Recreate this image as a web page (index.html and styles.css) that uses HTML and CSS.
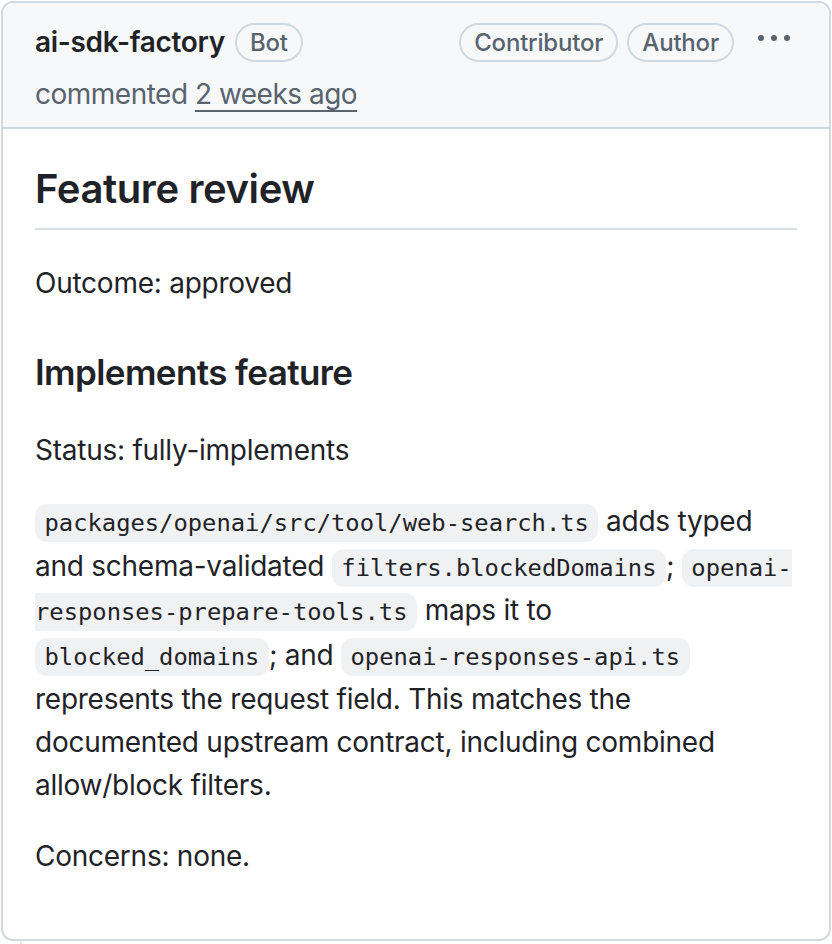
FILE: index.html
```html
<!DOCTYPE html>
<html lang="en">
<head>
<meta charset="utf-8">
<title>Feature review comment</title>
<link rel="stylesheet" href="styles.css">
</head>
<body>
<div class="comment">
  <div class="comment-header">
    <div class="header-row">
      <div class="author-group">
        <a class="author">ai-sdk-factory</a>
        <span class="label">Bot</span>
      </div>
      <div class="actions">
        <span class="label">Contributor</span>
        <span class="label">Author</span>
        <button class="kebab" aria-label="Show options">
          <svg width="32" height="32" viewBox="0 0 16 16" fill="currentColor"><path d="M8 9a1.5 1.5 0 1 0 0-3 1.5 1.5 0 0 0 0 3ZM1.5 9a1.5 1.5 0 1 0 0-3 1.5 1.5 0 0 0 0 3Zm13 0a1.5 1.5 0 1 0 0-3 1.5 1.5 0 0 0 0 3Z"/></svg>
        </button>
      </div>
    </div>
    <div class="meta">commented <a class="time">2 weeks ago</a></div>
  </div>
  <div class="comment-body">
    <h2>Feature review</h2>
    <p>Outcome: approved</p>
    <h3>Implements feature</h3>
    <p>Status: fully-implements</p>
    <p><code>packages/openai/src/tool/web-search.ts</code> adds typed and schema-validated <code>filters.blockedDomains</code>; <code>openai-responses-prepare-tools.ts</code> maps it to <code>blocked_domains</code>; and <code>openai-responses-api.ts</code> represents the request field. This matches the documented upstream contract, including combined allow/block filters.</p>
    <p>Concerns: none.</p>
  </div>
</div>
<div class="timeline-stub"></div>
</body>
</html>
```
FILE: styles.css
```css
html, body {
  margin: 0;
  padding: 0;
  background: #ffffff;
}

body {
  font-family: Inter, "Liberation Sans", sans-serif;
  color: #1f2328;
}

.comment {
  box-sizing: border-box;
  width: 830px;
  height: 940px;
  margin: 1px 0 0 1px;
  border: 2px solid #d1d9e0;
  border-radius: 12px;
  overflow: hidden;
  background: #ffffff;
}

.comment-header {
  background: #f6f8fa;
  border-bottom: 2px solid #d1d9e0;
  padding: 14px 32px 12px 32px;
}

.header-row {
  display: flex;
  align-items: center;
  justify-content: space-between;
  height: 50px;
}

.author-group {
  display: flex;
  align-items: center;
  gap: 10px;
}

.author {
  font-size: 28px;
  font-weight: 600;
  letter-spacing: -0.3px;
  color: #1f2328;
}

.label {
  display: inline-flex;
  align-items: center;
  box-sizing: border-box;
  height: 39px;
  padding: 0 13px;
  border: 2px solid #d1d9e0;
  border-radius: 999px;
  font-size: 24px;
  font-weight: 500;
  letter-spacing: -0.2px;
  color: #59636e;
}

.actions {
  display: flex;
  align-items: center;
  gap: 9px;
}

.kebab {
  display: flex;
  align-items: center;
  justify-content: center;
  margin-left: 15px;
  margin-right: 7px;
  padding: 0;
  border: 0;
  background: transparent;
  color: #59636e;
  width: 32px;
  height: 32px;
  position: relative;
  top: -3px;
}

.meta {
  margin-top: 6px;
  font-size: 28px;
  line-height: 42px;
  letter-spacing: -0.5px;
  color: #59636e;
}

.time {
  color: #59636e;
  text-decoration: underline;
  text-underline-offset: 6px;
  text-decoration-thickness: 2px;
}

.comment-body {
  padding: 32px 32px;
  font-size: 28px;
  line-height: 43px;
  letter-spacing: -0.25px;
}

.comment-body h2 {
  margin: 0 0 32px 0;
  padding-bottom: 11px;
  border-bottom: 2px solid #d8dee4;
  font-size: 40px;
  line-height: 56px;
  font-weight: 600;
  letter-spacing: -0.4px;
}

.comment-body h3 {
  margin: 45px 0 35px 0;
  font-size: 35px;
  line-height: 44px;
  font-weight: 600;
  letter-spacing: -0.6px;
}

.comment-body p {
  margin: 0 0 28px 0;
}

.comment-body p:last-child {
  margin-bottom: 0;
}

.comment-body code {
  font-family: "DejaVu Sans Mono", "Liberation Mono", monospace;
  font-size: 23.8px;
  line-height: 42.5px;
  letter-spacing: 0;
  padding: 5px 9.5px;
  background: #eff1f3;
  border-radius: 12px;
}

.timeline-stub {
  width: 2px;
  height: 4px;
  margin-left: 20px;
  background: #e6eaef;
}
```
